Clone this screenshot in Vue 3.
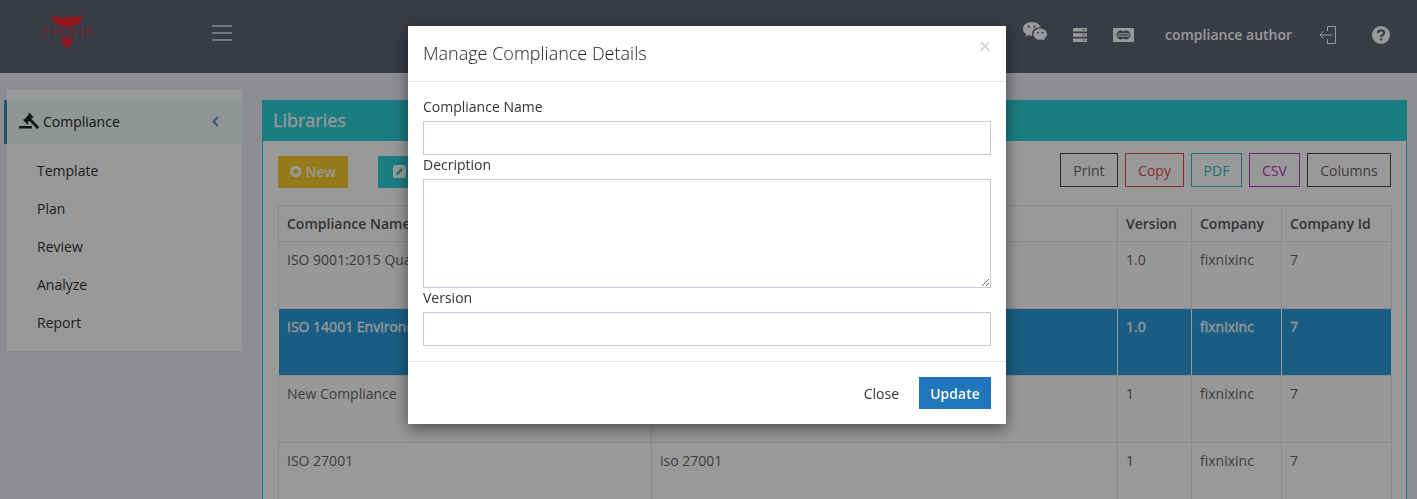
<script setup>
const menu = ['Template', 'Plan', 'Review', 'Analyze', 'Report']
const exportButtons = [
  { label: 'Print', tone: 'dark', width: 58 },
  { label: 'Copy', tone: 'red', width: 59 },
  { label: 'PDF', tone: 'teal', width: 51 },
  { label: 'CSV', tone: 'purple', width: 51 },
  { label: 'Columns', tone: 'dark', width: 84 }
]
const columns = ['Compliance Name', 'Description', 'Version', 'Company', 'Company Id']
const rows = [
  { name: 'ISO 9001:2015 Quality', desc: 'ISO 9001:2015 Quality', version: '1.0', company: 'fixnixinc', id: '7' },
  { name: 'ISO 14001 Environmental', desc: 'ISO 14001 Environmental', version: '1.0', company: 'fixnixinc', id: '7', selected: true },
  { name: 'New Compliance', desc: 'New Compliance', version: '1', company: 'fixnixinc', id: '7' },
  { name: 'ISO 27001', desc: 'iso 27001', version: '1', company: 'fixnixinc', id: '7' }
]
</script>

<template>
  <div class="page">
    <header class="topbar">
      <div class="logo">
        <svg width="54" height="35" viewBox="0 0 54 35">
          <path fill="#f5262c" d="M27 0L28.500 2.500 30 2 31 3.500 43 0 41 4 42 3.700 40 6.700 40.800 6.600 37 9.600 33 10 30.500 12H23.500L21 10 17 9.600 13.200 6.600 14 6.700 12 3.700 13 4 11 0 23 3.500 24 2 25.500 2.500z"/>
          <path fill="#f5262c" d="M27 35L24.800 30 21.500 27 20.500 23 24 25 25 22H29L30 25 33.500 23 32.500 27 29.200 30z"/>
        </svg>
        <span class="logo-text">FIXNIX</span>
      </div>
      <button class="burger" aria-label="Menu"><i></i><i></i><i></i></button>
      <div class="top-actions">
        <svg class="ic-wechat" width="24" height="19" viewBox="0 0 24 19">
          <path fill="#fff" d="M8.600 0C3.900 0 0 3 0 6.900c0 2.200 1.300 4 3.300 5.300l-.8 2.500 2.900-1.500c1 .3 2.100.5 3.200.5h.8c-.2-.6-.3-1.200-.3-1.900 0-3.700 3.500-6.500 7.700-6.500h.8C16.800 2.200 13 0 8.600 0z"/>
          <path fill="#fff" d="M24 12.200c0-3.200-3.200-5.600-6.800-5.600-3.800 0-6.800 2.500-6.800 5.600s3 5.600 6.800 5.600c.8 0 1.600-.1 2.300-.4l2.200 1.200-.6-2c1.700-1.100 2.900-2.700 2.900-4.400z"/>
          <circle cx="5.700" cy="4.700" r="1.100" fill="#5f6473"/><circle cx="11.300" cy="4.700" r="1.100" fill="#5f6473"/>
          <circle cx="14.800" cy="10.700" r=".9" fill="#5f6473"/><circle cx="19.600" cy="10.700" r=".9" fill="#5f6473"/>
        </svg>
        <svg class="ic-server" width="14" height="14" viewBox="0 0 14 14">
          <rect y="0" width="14" height="3.600" rx=".5" fill="#fff"/><rect y="5.200" width="14" height="3.600" rx=".5" fill="#fff"/><rect y="10.400" width="14" height="3.600" rx=".5" fill="#fff"/>
          <path stroke="#5f6473" stroke-width=".8" d="M9 1.800h3.500M9 7h3.500M9 12.200h3.500"/>
        </svg>
        <svg class="ic-card" width="21" height="14" viewBox="0 0 21 14">
          <rect width="21" height="14" rx="1" fill="#fff"/>
          <circle cx="7.800" cy="7" r="4.400" fill="#5f6473"/><circle cx="13.200" cy="7" r="4.400" fill="#5f6473"/>
          <path stroke="#fff" stroke-width=".7" d="M4.500 5.500h12M4 7h13M4.500 8.500h12"/>
        </svg>
        <span class="user">compliance author</span>
        <svg class="ic-exit" width="18" height="18" viewBox="0 0 18 18" fill="none" stroke="#fff" stroke-width="1">
          <path d="M8.500 5V.5h8v17h-8V13"/><path d="M13 9H1M4.500 5.500L1 9l3.500 3.500"/>
        </svg>
        <svg class="ic-help" width="18" height="18" viewBox="0 0 18 18">
          <circle cx="9" cy="9" r="9" fill="#fff"/>
          <path fill="none" stroke="#5f6473" stroke-width="2.200" d="M5.900 7c.1-1.700 1.400-2.700 3.100-2.700 1.800 0 3.100 1 3.100 2.500 0 2.200-3.100 2.200-3.100 4.200"/>
          <rect x="7.900" y="12.300" width="2.200" height="2.200" fill="#5f6473"/>
        </svg>
      </div>
    </header>

    <main class="main">
      <aside class="sidebar">
        <div class="side-head">
          <svg width="20" height="16" viewBox="0 0 20 16">
            <rect x="0" y="13" width="13" height="2.600" rx=".6" fill="#222"/>
            <path stroke="#222" stroke-width="4.600" d="M6.500 8.500L12 2.500"/>
            <path stroke="#222" stroke-width="1.500" d="M4.600 6.500L9 11M9.600 0L14 4.500"/>
            <path stroke="#222" stroke-width="2.800" stroke-linecap="round" d="M11 6.500L18.400 14.200"/>
          </svg>
          <span>Compliance</span>
          <svg class="chev" width="7" height="11" viewBox="0 0 7 11"><path d="M6 1L1.500 5.500 6 10" fill="none" stroke="#5b8fc2" stroke-width="2"/></svg>
        </div>
        <ul class="side-list">
          <li v-for="m in menu" :key="m">{{ m }}</li>
        </ul>
      </aside>

      <section class="panel">
        <h2 class="panel-title">Libraries</h2>
        <div class="panel-body">
          <div class="toolbar">
            <div class="left-tools">
              <button class="act act-new">
                <svg width="13" height="13" viewBox="0 0 13 13"><circle cx="6.500" cy="6.500" r="6.500" fill="#fff"/><path d="M6.500 3v7M3 6.500h7" stroke="#fbcb2b" stroke-width="2"/></svg>
                New
              </button>
              <button class="act act-edit">
                <svg width="13" height="13" viewBox="0 0 13 13"><rect width="13" height="13" rx="2.500" fill="#fff"/><path d="M3 10l.6-2.400 4.500-4.500 1.800 1.800-4.500 4.500z" fill="#2ac7d0"/></svg>
                Edit
              </button>
            </div>
            <div class="exports">
              <button
                v-for="b in exportButtons"
                :key="b.label"
                class="exp"
                :class="b.tone"
                :style="{ width: b.width + 'px' }"
              >{{ b.label }}</button>
            </div>
          </div>
          <table class="grid">
            <colgroup>
              <col class="c1" /><col class="c2" /><col class="c3" /><col class="c4" /><col class="c5" />
            </colgroup>
            <thead>
              <tr><th v-for="c in columns" :key="c">{{ c }}</th></tr>
            </thead>
            <tbody>
              <tr v-for="r in rows" :key="r.name" :class="{ sel: r.selected }">
                <td>{{ r.name }}</td><td>{{ r.desc }}</td><td>{{ r.version }}</td><td>{{ r.company }}</td><td>{{ r.id }}</td>
              </tr>
            </tbody>
          </table>
        </div>
      </section>
    </main>

    <div class="backdrop"></div>

    <div class="modal">
      <div class="m-head">
        <h3>Manage Compliance Details</h3>
        <span class="m-x">×</span>
      </div>
      <div class="m-body">
        <label>Compliance Name</label>
        <input type="text" />
        <label>Decription</label>
        <textarea></textarea>
        <label>Version</label>
        <input type="text" />
      </div>
      <div class="m-foot">
        <button class="m-close">Close</button>
        <button class="m-update">Update</button>
      </div>
    </div>
  </div>
</template>

<style>
html, body { margin: 0; height: 100%; overflow: hidden; }
</style>

<style scoped>
* { box-sizing: border-box; }
.page {
  height: 499px;
  overflow: hidden;
  background: #e9edf5;
  font-family: "Open Sans", "Liberation Sans", sans-serif;
  font-size: 14px;
  color: #333;
}
button { font-family: inherit; cursor: pointer; }

.topbar {
  height: 73px;
  background: #5f6473;
  display: flex;
  align-items: flex-start;
  position: relative;
}
.logo {
  width: 54px;
  height: 35px;
  margin: 15px 0 0 40px;
  position: relative;
}
.logo svg { display: block; }
.logo-text {
  position: absolute;
  left: -3px;
  top: 12px;
  width: 62px;
  text-align: center;
  font-family: "DejaVu Serif", serif;
  font-size: 11.500px;
  line-height: 11px;
  letter-spacing: 1.400px;
  white-space: nowrap;
  color: #d02a30;
}
.burger {
  margin: 25px 0 0 118px;
  width: 20px;
  height: 16px;
  padding: 0;
  border: 0;
  background: none;
  display: flex;
  flex-direction: column;
  justify-content: space-between;
}
.burger i { display: block; height: 2px; background: #c3c5c9; }
.top-actions {
  margin-left: auto;
  margin-right: 27px;
  display: flex;
  align-items: flex-start;
  height: 73px;
}
.ic-wechat { margin-top: 22px; }
.ic-server { margin: 28px 0 0 26px; }
.ic-card { margin: 28px 0 0 26px; }
.user {
  width: 127px;
  margin: 25px 0 0 31px;
  font-weight: 600;
  line-height: 20px;
  color: #fff;
  white-space: nowrap;
}
.ic-exit { margin: 26px 0 0 27px; }
.ic-help { margin: 26px 0 0 35px; }

.main { display: flex; align-items: flex-start; }
.sidebar {
  width: 235px;
  margin: 17px 0 0 7px;
  padding: 10px 0 9px;
  background: #fff;
}
.side-head {
  height: 44px;
  margin-left: -3px;
  border-left: 3px solid #3f88c5;
  background: #f0f9fa;
  display: flex;
  align-items: center;
  padding-left: 12px;
  padding-bottom: 2px;
  color: #222;
}
.side-head span { margin-left: 4px; }
.chev { margin-left: auto; margin-right: 23px; }
.side-list { list-style: none; margin: 8px 0 0; padding: 0; }
.side-list li { height: 38px; line-height: 38px; padding-left: 30px; color: #333; }

.panel { width: 1145px; margin: 27px 0 0 20px; }
.panel-title {
  margin: 0;
  height: 41px;
  padding-left: 11px;
  background: #2bd0d8;
  color: #fff;
  font-size: 18px;
  font-weight: 400;
  -webkit-text-stroke: .3px #fff;
  line-height: 40px;
}
.panel-body {
  height: 400px;
  border: 1px solid #2bd0d8;
  border-top: 0;
  background: #fff;
  padding: 12px 15px 0;
}
.toolbar { display: flex; justify-content: space-between; align-items: flex-start; height: 52px; }
.left-tools { display: flex; gap: 30px; margin-top: 3px; }
.act {
  height: 32px;
  border: 0;
  color: #fff;
  font-size: 14px;
  font-weight: 600;
  display: flex;
  align-items: center;
  gap: 4px;
  padding: 0 12px 2px;
}
.act-new { width: 70px; background: #fbcb2b; }
.act-edit { width: 70px; background: #2bd0d8; padding-left: 15px; }
.exports { display: flex; gap: 7px; }
.exp {
  height: 34px;
  padding: 0;
  background: transparent;
  font-size: 14px;
  border: 1px solid;
  text-align: center;
}
.exp.dark { color: #666; border-color: #444; }
.exp.red { color: #e04a55; border-color: #e04a55; }
.exp.teal { color: #2bc0c8; border-color: #2bc0c8; }
.exp.purple { color: #b03cc0; border-color: #b03cc0; }

.grid {
  width: 1113px;
  table-layout: fixed;
  border-collapse: collapse;
}
.c1 { width: 373px; }
.c2 { width: 466px; }
.c3 { width: 74px; }
.c4 { width: 90px; }
.c5 { width: 110px; }
.grid th, .grid td {
  border: 1px solid #e4e7ea;
  text-align: left;
  padding: 8px;
  line-height: 20px;
  vertical-align: top;
  overflow: hidden;
  white-space: nowrap;
}
.grid th { height: 35px; font-weight: 600; color: #555; padding-bottom: 7px; }
.grid td { height: 67px; color: #666; }
.grid tbody tr:nth-child(odd) td { background: #fcfefc; }
.grid tr.sel td {
  background: #2b9cdc !important;
  color: #fff;
  -webkit-text-stroke: .3px #fff;
  border-left-color: #fff;
  border-right-color: #fff;
}

.backdrop {
  position: fixed;
  inset: 0;
  background: #000;
  opacity: .4;
}
.modal {
  position: fixed;
  left: 408px;
  top: 26px;
  width: 598px;
  height: 398px;
  background: #fff;
  box-shadow: 0 5px 15px rgba(0, 0, 0, .5);
  display: flex;
  flex-direction: column;
}
.m-head {
  height: 56px;
  border-bottom: 1px solid #e5e5e5;
  padding: 14px 15px 15px;
  display: flex;
  justify-content: space-between;
  flex: none;
}
.m-head h3 {
  margin: 0;
  font-size: 18px;
  font-weight: 300;
  line-height: 26px;
  color: #222;
}
.m-x {
  font-size: 21px;
  font-weight: 400;
  line-height: 10px;
  margin-top: 1px;
  color: #ccc;
}
.m-body {
  padding: 15px 15px 0;
  flex: 1;
  display: flex;
  flex-direction: column;
}
.m-body label {
  height: 24px;
  line-height: 20px;
  color: #333;
}
.m-body input, .m-body textarea {
  display: block;
  width: 100%;
  border: 1px solid #c2cad8;
  background: #fff;
  padding: 6px 12px;
  outline: none;
  margin: 0;
}
.m-body input { height: 34px; flex: none; }
.m-body textarea { height: 109px; flex: none; resize: vertical; }
.m-foot {
  height: 63px;
  flex: none;
  border-top: 1px solid #e5e5e5;
  padding: 15px;
  display: flex;
  justify-content: flex-end;
  align-items: center;
  gap: 8px;
}
.m-foot button { height: 32px; border: 0; font-size: 14px; }
.m-close { background: none; color: #333; padding: 0 12px; }
.m-update { width: 72px; background: #1f76bd; color: #fff; font-weight: 600; }
</style>
